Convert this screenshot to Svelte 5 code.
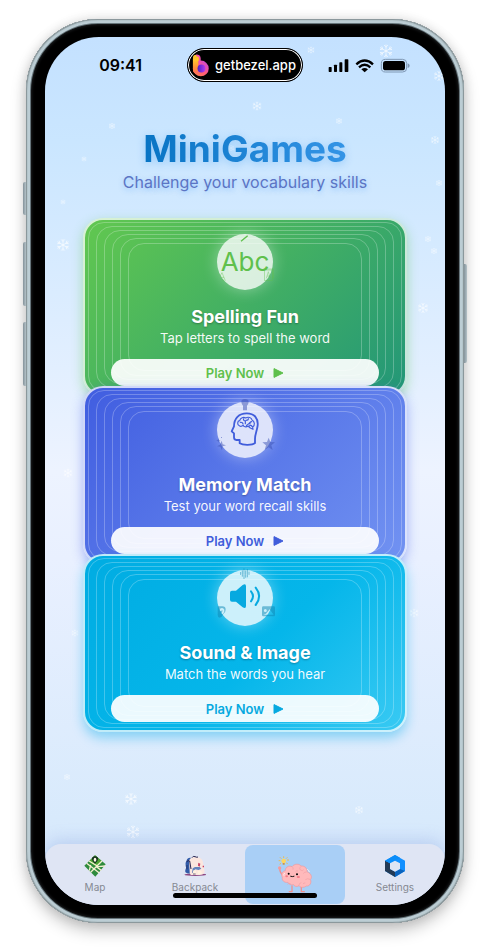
<script>
  const games = [
    { id: 'spelling', title: 'Spelling Fun', text: 'Tap letters to spell the word' },
    { id: 'memory', title: 'Memory Match', text: 'Test your word recall skills' },
    { id: 'sound', title: 'Sound & Image', text: 'Match the words you hear' }
  ];

  const rings = [
    [2, 3], [6, 11], [10, 19], [14, 27], [18, 35], [23, 43]
  ];

  // x and y in percent of the screen, size in pixels
  const flakes = [
    [53, 7.9, 9], [73.5, 9.7, 6], [16.8, 10.3, 6], [9.8, 14, 5], [98.6, 4.5, 10],
    [97.4, 11.9, 8], [98.6, 16.8, 6], [95.8, 23.3, 6], [97.3, 24.6, 6], [4.4, 24, 12],
    [4.5, 19, 5], [94.4, 31.2, 10], [5.8, 50.2, 9], [7.6, 68.7, 7], [92.2, 66.4, 9],
    [5.6, 85.3, 6], [21.4, 87.8, 12], [22.1, 91.6, 13], [78.4, 89.1, 8], [66.5, 1.5, 7],
    [85.3, 1.6, 13], [46.6, 12.8, 6]
  ];
</script>

<div class="phone">
  <span class="key action"></span>
  <span class="key up"></span>
  <span class="key down"></span>
  <span class="key power"></span>

  <div class="screen">
    <div class="snow" aria-hidden="true">
      {#each flakes as [x, y, s]}
        <svg class="flake" viewBox="0 0 24 24" width={s} height={s} style="left:{x}%;top:{y}%">
          <g fill="none" stroke="#fff" stroke-width="1.500" stroke-linecap="round">
            {#each [0, 60, 120, 180, 240, 300] as a}
              <path d="M12 12V0M9 1.500l3 3.500 3-3.500" transform="rotate({a} 12 12)" />
            {/each}
          </g>
        </svg>
      {/each}
    </div>

    <header class="status">
      <span class="time">09:41</span>
      <div class="island">
        <svg width="17" height="23" viewBox="0 0 50 70">
          <defs>
            <linearGradient id="bar" x1="0" y1="0" x2="0" y2="1">
              <stop offset="0" stop-color="#ffd02a" /><stop offset=".6" stop-color="#ff9038" /><stop offset="1" stop-color="#ff6a5e" />
            </linearGradient>
            <linearGradient id="bowl" x1="0" y1="1" x2="1" y2="0">
              <stop offset="0" stop-color="#ff8a3c" /><stop offset=".5" stop-color="#ff5a7c" /><stop offset="1" stop-color="#c044f4" />
            </linearGradient>
            <linearGradient id="core" x1="0" y1="0" x2="1" y2="0">
              <stop offset="0" stop-color="#4a1fc8" /><stop offset="1" stop-color="#b63cf0" />
            </linearGradient>
          </defs>
          <rect x="2" y="2" width="21" height="56" rx="10" fill="url(#bar)" />
          <circle cx="26" cy="44" r="24" fill="url(#bowl)" />
          <path d="M12 4q11 0 11 10v22" fill="none" stroke="#f24fb4" stroke-width="5" />
          <path d="M2 14h16v32q0 8-8 14Q2 54 2 44Z" fill="url(#bar)" />
          <circle cx="28" cy="44" r="12" fill="url(#core)" />
        </svg>
        <span>getbezel.app</span>
      </div>
      <svg class="signals" width="82" height="15" viewBox="250 168 246 45">
        <g fill="#000">
          <rect x="252" y="195" width="9" height="15" rx="2" /><rect x="268" y="188" width="9" height="22" rx="2" />
          <rect x="284" y="181" width="9" height="29" rx="2" /><rect x="300" y="172" width="11" height="38" rx="2" />
          <path d="m350 202 10 9 10-9q-10-8-20 0Z" />
        </g>
        <g fill="none" stroke="#000" stroke-width="7">
          <path d="M335 187q25-23 50 0" /><path d="M343 196q17-15 34 0" />
        </g>
        <rect x="410" y="172" width="76" height="38" rx="12" fill="none" stroke="#7f97b3" stroke-width="3" />
        <rect x="415" y="177" width="66" height="28" rx="8" /><path d="M489 184q6 2 6 7t-6 7Z" fill="#7f97b3" />
      </svg>
    </header>

    <div class="heading">
      <h1>MiniGames</h1>
      <p>Challenge your vocabulary skills</p>
    </div>

    <main class="games">
      {#each games as game (game.id)}
        <section class="card {game.id}">
          {#each rings as [v, h]}
            <span class="ring" style="inset:{v}px {h}px"></span>
          {/each}
          <div class="badge">
            {#if game.id === 'spelling'}
              <span>Abc</span>
              <svg viewBox="24 24 192 192" width="64" height="64" fill="none" stroke="currentColor">
                <path d="m108 58 20-17" stroke-width="4" />
                <g opacity=".6" stroke-width="2">
                  <path d="m45 162 6-10 10 24M48 166h9M49 170l8 8" />
                  <rect x="178" y="144" width="24" height="31" /><path d="m184 169 6-20 6 20M186 162h8M184 144v-3h21v28" />
                </g>
              </svg>
            {:else if game.id === 'memory'}
              <svg viewBox="24 24 192 192" width="64" height="64">
                <g class="extras">
                  <path d="M109 35q0-8 11-8t11 8q0 6-5 12v14h-12V47q-5-6-5-12Z" />
                  <path d="m191 143 5 13 14 1-11 9 4 14-12-8-12 8 4-14-11-9 14-1Z" />
                  <path d="m50 152 3 11 10 3-10 3-2 12-5-11-10-1 9-5ZM40 145l2 5 5 1-5 2-2 5-2-5-5-2 5-1ZM48 141h3v3h-3z" />
                </g>
                <g fill="none" stroke="currentColor" stroke-linejoin="round" stroke-linecap="round">
                  <path stroke-width="5.500" d="M104 160v-10H94q-7 0-7-8v-12l-7-6 7-15c0-24 15-39 38-39 24 0 35 16 33 36-2 17-8 26-8 41v12c-8 7-36 7-46 1Z" />
                  <path stroke-width="3.500" d="M104 108c-9-4-7-15 0-16 2-9 12-12 18-8 8-5 18-1 19 6 8 4 10 16 2 21l1 7-8-4-7-6c-6 5-13 2-14-2-4 3-8 4-11 2ZM106 97c5-1 8 2 8 5M116 86c-2 5 2 7 5 7v8M123 91c4 0 7-2 7-5M124 108c1-7 9-4 10-10M140 95c-4 0-6 3-5 7M132 111c-1-4 6-7 9-2" />
                </g>
              </svg>
            {:else}
              <svg viewBox="24 17 192 192" width="64" height="64">
                <g class="extras">
                  <path fill="none" stroke-width="3" d="M107 35v9M112 30v19M117 24v32M122 30v22M127 26v25M132 34v10" />
                  <path fill-rule="evenodd" stroke="none" d="M38 138h14q10 0 10 10 0 9-8 14-3 10-10 10-6 0-6-8Zm9 6q-4 3-3 8l5 1q0-4 3-3 2 2-1 5l-2 5 4 1q7-6 5-13-3-7-11-4Z" />
                  <path fill-rule="evenodd" stroke="none" d="M175 138h31q4 0 4 4v22q0 4-4 4h-31q-4 0-4-4v-22q0-4 4-4Zm6 8a4 4 0 1 0 0 9 4 4 0 0 0 0-9Zm-6 17h31l-12-16-11 13Z" />
                </g>
                <path fill="currentColor" d="M75 97q0-6 6-6h12l20-17q10-6 10 4v59q0 10-10 4l-20-17H81q-6 0-6-6Z" />
                <g fill="none" stroke="currentColor" stroke-width="6" stroke-linecap="round">
                  <path d="M138 93q12 15 0 30" /><path d="M152 82q21 26 0 52" />
                </g>
              </svg>
            {/if}
          </div>
          <h2>{game.title}</h2>
          <p>{game.text}</p>
          <button type="button">
            Play Now
            <svg width="11" height="10" viewBox="0 0 11 10"><path fill="currentColor" stroke="currentColor" stroke-linejoin="round" d="M1 .6v8.800L10 5Z" /></svg>
          </button>
        </section>
      {/each}
    </main>

    <nav class="tabs">
      <a href="#map">
        <svg width="22" height="22" viewBox="0 0 66 66">
          <path fill="#2e8b3d" d="m33 1 32 27-31 37L1 32Z" />
          <path fill="#4ba22f" d="m33 1 20 17-16 18-23-16Z" />
          <g stroke="#f3efce" stroke-width="4" fill="none"><path d="M8 25 46 54M15 18l28 17 20-2M54 18 20 52M38 36l14 10M20 30l-4 17" /></g>
          <path fill="#15301c" d="M33 26q-9-6-9-14 0-8 9-8t9 8q0 8-9 14Z" /><ellipse cx="33" cy="14" rx="4" ry="6" fill="#fffbe6" />
        </svg>
        <span>Map</span>
      </a>
      <a href="#backpack">
        <svg width="22" height="22" viewBox="0 0 66 66">
          <ellipse cx="34" cy="59" rx="33" ry="4" fill="#8c4a83" />
          <path fill="#315ba8" d="M8 16q2-9 12-8l8 49-18-2q-8-2-6-10 4-5 1-13-2-8 3-16Z" />
          <path fill="#fbe6df" d="M15 17Q20 5 36 6q21 1 22 21 2 11 4 25-3 8-15 8H25q-9 0-8-10Z" />
          <path d="M24 8q3-6 9-3t9 1M8 20q5-5 9-2l4 24" fill="none" stroke="#24224e" stroke-width="3" />
          <path fill="#6483bd" d="M33 36h14l5 5-8 4-11-2-4 10h-5l2-13Z" />
          <path fill="#c63f62" d="m43 23 6 3-2 9-5-3ZM56 32h4v5h-4Z" />
          <path fill="#fff2df" d="M27 47q5-4 9 0v9h-9Zm14 2q7-5 12 1v7H41Z" />
          <path d="M9 30v13M27 57h8" stroke="#25264e" stroke-width="2" />
        </svg>
        <span>Backpack</span>
      </a>
      <a href="#games" class="active" aria-label="MiniGames" aria-current="page">
        <svg width="35" height="38" viewBox="98 228 105 114">
          <g stroke="#f5b833" stroke-width="2.500"><path d="M115 229v5M104 232l4 4M126 232l-4 4M100 242h5M125 240h6M103 253l4-3M127 251l-4-2" /></g>
          <circle cx="115" cy="243" r="7" fill="#ffd65c" /><path fill="#c9954b" d="M112 249h6v5h-6z" />
          <path d="M103 263q0 18 13 25M140 318v17h-8M168 318v17h9" fill="none" stroke="#f0918f" stroke-width="4" stroke-linecap="round" />
          <circle cx="103" cy="264" r="5" fill="#f79a9a" />
          <path fill="#ffb9bb" stroke="#f2999c" stroke-width="2" d="M111 292c-5-10 1-19 9-20 0-12 12-16 20-12 8-10 22-9 27-2 12-1 19 8 18 17 12 5 17 16 10 24 5 9-2 20-12 19-8 6-18 5-22-1-6 4-14 3-16-3-8 2-15-1-17-7-10 2-19-5-17-15Z" />
          <g fill="none" stroke="#f2a0a5" stroke-width="2"><path d="M140 260q5 3 3 9M167 259q-7 5-2 11 7 4 10-1M184 276q-8-1-10 5M158 273q-5-2-8 3M194 298q-8-4-14 1M161 316q0-7 7-8M126 313q4-4 10-2M180 309q-5-1-7 3" /></g>
          <ellipse cx="124" cy="289" rx="4" ry="3" fill="#f77b88" /><ellipse cx="159" cy="291" rx="5" ry="3" fill="#f77b88" />
          <circle cx="130" cy="281" r="3" /><circle cx="155" cy="283" r="3" />
          <path d="M136 289q5 2 10 0" fill="none" stroke="#111" stroke-width="3" stroke-linecap="round" />
          <path d="M186 268q5 3 6 8M118 279q-4 4-2 8" stroke="#fff0f0" stroke-width="3" fill="none" />
        </svg>
      </a>
      <a href="#settings">
        <svg width="22" height="22" viewBox="0 0 66 66">
          <path fill="#1290ff" d="m33 0 30 17v31L33 66 3 48V17Z" />
          <path fill="#0a63bd" d="M63 48 33 66V50l15-8Z" />
          <path fill="#233a55" d="m3 17 15 8v17l15 8v16L3 48Z" />
          <path fill="#0a8df9" d="m33 0 15 8-30 17L3 17Z" />
          <path fill="#dee5f4" d="m33 17 15 8v17l-15 8-15-8V25Z" />
        </svg>
        <span>Settings</span>
      </a>
    </nav>
    <span class="home"></span>
  </div>
</div>

<style>
  :global(body) {
    margin: 0;
    background: #fff;
    font-family: Inter, "Liberation Sans", sans-serif;
  }
  .phone {
    position: relative;
    box-sizing: border-box;
    display: flex;
    min-height: calc(100vh - 46px);
    margin: 19px 26px 27px;
    padding: 18px 19px;
    border-radius: 72px;
    background: #000;
    box-shadow:
      inset 0 0 0 1px #8b989c,
      inset 0 0 0 2px #b4c5cb,
      inset 0 0 0 4px #bccdd4,
      inset 0 0 0 5px #66757b,
      inset 0 0 3px 6px #1c1e20,
      0 8px 16px rgba(0, 0, 0, 0.22),
      0 0 12px rgba(0, 0, 0, 0.12);
  }
  .key {
    position: absolute;
    left: -3px;
    width: 3px;
    border-radius: 2px 0 0 2px;
    background: linear-gradient(90deg, #84929a, #b4c2c8);
  }
  .action { top: 163px; height: 33px; }
  .up { top: 223px; height: 64px; }
  .down { top: 303px; height: 64px; }
  .power {
    top: 245px;
    right: -3px;
    left: auto;
    height: 99px;
    border-radius: 0 2px 2px 0;
  }
  .screen {
    position: relative;
    display: flex;
    flex: 1;
    flex-direction: column;
    overflow: hidden;
    border-radius: 54px;
    background: linear-gradient(#c4e1ff 0%, #cae6ff 12%, #edf3ff 50%, #e9f0ff 60%, #d8eafc 90%, #d4e4fb 100%);
  }
  .snow {
    position: absolute;
    inset: 0;
  }
  .flake {
    position: absolute;
    transform: translate(-50%, -50%);
    opacity: 0.75;
  }
  .status {
    position: relative;
    display: grid;
    grid-template-columns: 1fr 116px 1fr;
    align-items: center;
    margin-top: 11px;
  }
  .status > * {
    margin-bottom: 1px;
  }
  .time {
    padding-right: 45px;
    font-size: 16px;
    font-weight: 600;
    line-height: 24px;
    text-align: right;
  }
  .island {
    display: flex;
    align-items: center;
    gap: 6px;
    box-sizing: border-box;
    height: 34px;
    padding-left: 4px;
    border: 1px solid #000;
    border-radius: 17px;
    background: #000;
    box-shadow: inset 0 0 0 1px #fff;
    color: #fff;
    font-size: 13px;
    font-weight: 500;
  }
  .signals {
    margin-left: 25px;
  }
  .heading {
    position: relative;
    display: flex;
    flex-direction: column;
    align-items: center;
    margin: 45px 0 25px;
  }
  h1, h2, p { margin: 0; }
  h1 {
    background: linear-gradient(90deg, #0874c4, #3494e6);
    background-clip: text;
    color: transparent;
    filter: drop-shadow(0 2px 4px rgba(80, 165, 240, 0.45));
    font-size: 37px;
    font-weight: 700;
    line-height: 42px;
  }
  .heading p {
    color: #5b74c4;
    font-size: 16px;
    line-height: 22px;
    margin-top: 1px;
    text-shadow: 0 2px 5px rgba(90, 170, 250, 0.5);
  }
  .games {
    position: relative;
    display: flex;
    flex-direction: column;
    margin: 0 38px 48px;
  }
  .card {
    position: relative;
    display: flex;
    flex-direction: column;
    align-items: center;
    padding: 14px 26px 8px;
    border: 2px solid rgba(255, 255, 255, 0.75);
    border-radius: 20px;
    color: #fff;
  }
  .card + .card { margin-top: -10px; }
  .spelling {
    --tint: #5fc04c;
    background: linear-gradient(135deg, #62c84f, #229678) border-box;
    box-shadow: 0 4px 12px rgba(98, 200, 90, 0.45);
  }
  .memory {
    --tint: #405ddb;
    --extra: #3a50b4;
    background: linear-gradient(135deg, #405de0, #7293f2) border-box;
    box-shadow: 0 4px 12px rgba(80, 105, 235, 0.45);
  }
  .sound {
    --tint: #06a9e0;
    --extra: #0a86b4;
    background: linear-gradient(135deg, #00ace2 0%, #05b6ea 55%, #3acaf3 100%) border-box;
    box-shadow: 0 6px 12px rgba(0, 170, 235, 0.4);
  }
  .ring {
    position: absolute;
    border: 1px solid rgba(255, 255, 255, 0.25);
    border-radius: 16px;
  }
  .badge {
    position: relative;
    display: flex;
    align-items: center;
    justify-content: center;
    width: 56px;
    height: 56px;
    margin-bottom: 15px;
    border-radius: 50%;
    background: rgba(255, 255, 255, 0.8);
    box-shadow: 0 0 16px rgba(255, 255, 255, 0.4);
    color: var(--tint);
    font-size: 26px;
    line-height: 32px;
  }
  .badge svg {
    position: absolute;
    inset: -4px;
  }
  .extras {
    fill: var(--extra);
    stroke: var(--extra);
    stroke-width: 0;
    opacity: 0.5;
  }
  h2 {
    position: relative;
    font-size: 18px;
    font-weight: 700;
    line-height: 24px;
    text-shadow: 0 1px 2px rgba(0, 0, 0, 0.3);
  }
  .card p {
    position: relative;
    color: rgba(255, 255, 255, 0.94);
    font-size: 13px;
    line-height: 18px;
  }
  button {
    position: relative;
    display: flex;
    align-items: center;
    align-self: stretch;
    justify-content: center;
    gap: 9px;
    height: 27px;
    margin-top: 12px;
    padding: 0;
    border: 0;
    border-radius: 14px;
    background: rgba(255, 255, 255, 0.92);
    color: var(--tint);
    font: 600 13px/18px Inter, "Liberation Sans", sans-serif;
  }
  .tabs {
    position: relative;
    display: flex;
    height: 61px;
    margin-top: auto;
    border-radius: 16px 16px 0 0;
    background: #dfe5f4;
    box-shadow: 0 -4px 16px rgba(115, 145, 215, 0.28);
  }
  .tabs a {
    display: flex;
    flex: 1;
    flex-direction: column;
    align-items: center;
    gap: 3px;
    box-sizing: border-box;
    padding-top: 11px;
    color: #858992;
    font-size: 10px;
    line-height: 14px;
    text-decoration: none;
  }
  .tabs .active {
    margin: 1px 0;
    border-radius: 8px;
    background: #a9cff6;
  }
  .home {
    position: absolute;
    bottom: 7px;
    left: 50%;
    width: 144px;
    height: 5px;
    border-radius: 3px;
    background: #000;
    transform: translateX(-50%);
  }
</style>
